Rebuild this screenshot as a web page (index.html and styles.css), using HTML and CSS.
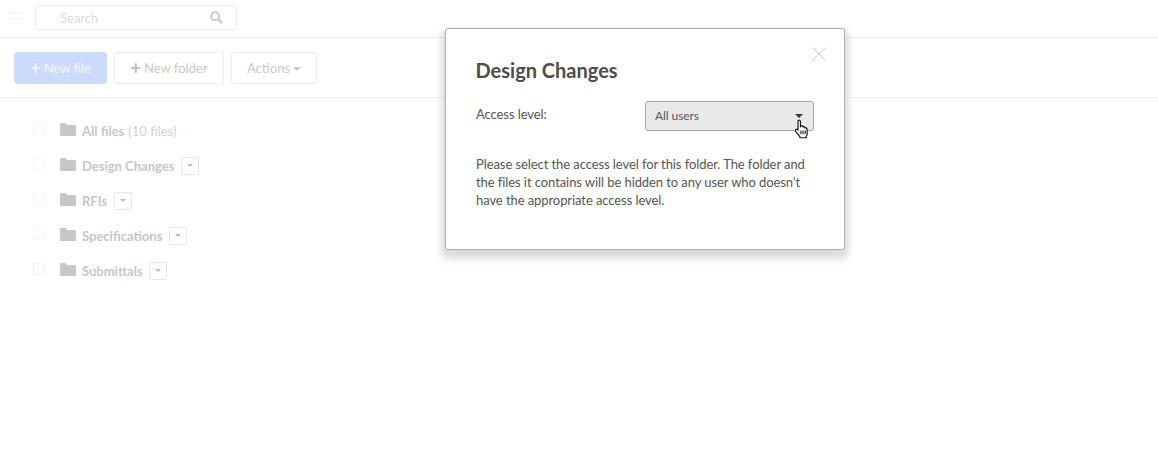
FILE: index.html
```html
<!DOCTYPE html>
<html lang="en">
<head>
<meta charset="utf-8">
<title>Files</title>
<link rel="stylesheet" href="styles.css">
</head>
<body>
<div class="page">
  <header class="topbar">
    <svg class="menu-icon" width="16" height="12" viewBox="0 0 16 12"><path d="M0 1h15M0 6h15M0 11h15" stroke="#eeeff1" stroke-width="1" fill="none"/></svg>
    <div class="search">
      <span class="search-text">Search</span>
      <svg width="13" height="13" viewBox="0 0 13 13"><circle cx="5.2" cy="5.2" r="4" stroke="#c4c4c4" stroke-width="1.7" fill="none"/><path d="M8.2 8.2l3.8 3.8" stroke="#c4c4c4" stroke-width="2" fill="none"/></svg>
    </div>
  </header>
  <div class="toolbar">
    <button class="btn btn-primary"><span class="plus">+</span>New file</button>
    <button class="btn btn-new-folder"><span class="plus">+</span>New folder</button>
    <button class="btn btn-actions">Actions<span class="caret"></span></button>
  </div>
  <ul class="folders">
    <li class="folder"><span class="check"></span><svg class="folder-icon" width="16" height="13" viewBox="0 0 16 13"><path d="M1.5 0h4l1.5 2h7.5a1.5 1.5 0 0 1 1.5 1.5v8a1.5 1.5 0 0 1-1.5 1.5h-13A1.5 1.5 0 0 1 0 11.500v-10A1.500 1.500 0 0 1 1.500 0z" fill="#c6c6c6"/></svg><span class="name">All files</span><span class="count">(10 files)</span></li>
    <li class="folder"><span class="check"></span><svg class="folder-icon" width="16" height="13" viewBox="0 0 16 13"><path d="M1.5 0h4l1.5 2h7.5a1.5 1.5 0 0 1 1.5 1.5v8a1.5 1.5 0 0 1-1.5 1.5h-13A1.5 1.5 0 0 1 0 11.500v-10A1.500 1.500 0 0 1 1.500 0z" fill="#c6c6c6"/></svg><span class="name">Design Changes</span><span class="drop"><span class="caret small"></span></span></li>
    <li class="folder"><span class="check"></span><svg class="folder-icon" width="16" height="13" viewBox="0 0 16 13"><path d="M1.5 0h4l1.5 2h7.5a1.5 1.5 0 0 1 1.5 1.5v8a1.5 1.5 0 0 1-1.5 1.5h-13A1.5 1.5 0 0 1 0 11.500v-10A1.500 1.500 0 0 1 1.500 0z" fill="#c6c6c6"/></svg><span class="name">RFIs</span><span class="drop"><span class="caret small"></span></span></li>
    <li class="folder"><span class="check"></span><svg class="folder-icon" width="16" height="13" viewBox="0 0 16 13"><path d="M1.5 0h4l1.5 2h7.5a1.5 1.5 0 0 1 1.5 1.5v8a1.5 1.5 0 0 1-1.5 1.5h-13A1.5 1.5 0 0 1 0 11.500v-10A1.500 1.500 0 0 1 1.500 0z" fill="#c6c6c6"/></svg><span class="name">Specifications</span><span class="drop"><span class="caret small"></span></span></li>
    <li class="folder"><span class="check"></span><svg class="folder-icon" width="16" height="13" viewBox="0 0 16 13"><path d="M1.5 0h4l1.5 2h7.5a1.5 1.5 0 0 1 1.5 1.5v8a1.5 1.5 0 0 1-1.5 1.5h-13A1.5 1.5 0 0 1 0 11.500v-10A1.500 1.500 0 0 1 1.500 0z" fill="#c6c6c6"/></svg><span class="name">Submittals</span><span class="drop"><span class="caret small"></span></span></li>
  </ul>
  <section class="modal">
    <svg class="close" width="14" height="14" viewBox="0 0 14 14"><path d="M.5.5l13 13M13.500.5l-13 13" stroke="#c9c9c9" stroke-width="1" fill="none"/></svg>
    <h2 class="modal-title">Design Changes</h2>
    <div class="field">
      <span class="field-label">Access level:</span>
      <div class="select"><span>All users</span><span class="select-caret"></span></div>
    </div>
    <p class="help">Please select the access level for this folder. The folder and the files it contains will be hidden to any user who doesn’t have the appropriate access level.</p>
    <svg class="cursor" width="15" height="19" viewBox="0 0 15 19"><path d="M4 1.500c.8-.8 2-.4 2 .8v5.200l.2-.8c.6-.8 1.800-.5 2 .4l.1.500c.6-.7 1.700-.4 1.900.5l.1.500c.7-.6 1.800-.2 1.900.8l.3 3.600c.1 1.700-.3 2.700-1 3.800v1H5.500v-1L1.700 12C.8 10.800 1.300 9.600 2.700 9.800l1 .7V2.200z" fill="#fff" stroke="#111" stroke-width="1.100" stroke-linejoin="round"/><path d="M6.500 11v3.500M8.500 11v3.500M10.500 11v3.500" stroke="#111" stroke-width="1" fill="none"/></svg>
  </section>
</div>
</body>
</html>
```
FILE: styles.css
```css
* { box-sizing: border-box; }
html, body { margin: 0; padding: 0; }
body { background: #fff; font-family: Lato, "Open Sans", sans-serif; }
.page { position: relative; width: 1158px; height: 452px; overflow: hidden; }

.topbar { height: 38px; border-bottom: 1px solid #eeeeee; display: flex; align-items: center; padding: 0 0 1px 9px; gap: 10px; }
.menu-icon { display: block; }
.search { width: 202px; height: 25px; border: 1px solid #eaeaea; border-radius: 3px; display: flex; align-items: center; justify-content: space-between; padding: 0 13px 0 24px; margin-top: -1px; }
.search-text { font-size: 13px; color: #dcdcdc; }

.toolbar { height: 60px; border-bottom: 1px solid #f1f1f1; display: flex; align-items: center; padding: 1px 0 0 14px; gap: 7px; }
.btn { height: 32px; border-radius: 3px; border: 1px solid #ececec; background: #fff; color: #c9c9c9; font: 13px/1 Lato, sans-serif; padding: 0; display: flex; align-items: center; justify-content: center; }
.btn-primary { width: 93px; background: #ccdafb; border-color: #ccdafb; color: #f2f5fe; }
.btn-new-folder { width: 110px; }
.btn-actions { width: 86px; }
.plus { font-size: 18px; font-weight: 700; line-height: 1; margin-right: 3px; }
.btn-new-folder .plus { color: #bcbcbc; }
.caret { display: inline-block; width: 0; height: 0; border-left: 4px solid transparent; border-right: 4px solid transparent; border-top: 4px solid #c6c6c6; margin-left: 3px; margin-top: 2px; }
.caret.small { border-left-width: 3px; border-right-width: 3px; border-top-width: 3px; border-top-color: #bdbdbd; margin: 0; }

.folders { list-style: none; margin: 0; padding: 15px 0 0 33px; }
.folder { height: 35px; display: flex; align-items: center; font-size: 13px; color: #c6c6c6; }
.check { width: 12px; height: 12px; border: 1px solid #f3f3f3; border-radius: 2px; margin: -4px 15px 0 0; }
.folder-icon { margin: -3px 6px 0 0; flex: none; }
.name { font-weight: 700; }
.count { margin-left: 4px; color: #d2d2d2; }
.drop { width: 18px; height: 18px; border: 1px solid #e6e6e6; border-radius: 2px; margin-left: 6.6px; display: flex; align-items: center; justify-content: center; }

.modal { position: absolute; left: 445px; top: 28px; width: 400px; height: 222px; background: #fff; border: 1px solid #b0b0b0; border-radius: 3px; box-shadow: 0 4px 6px 3px rgba(0,0,0,.1), 0 7px 8px 5px rgba(0,0,0,.05); padding: 29px 30px 0; color: #555; letter-spacing: -.08px; }
.close { position: absolute; right: 18px; top: 18px; }
.modal-title { margin: 0 0 19px -.5px; font-size: 20px; font-weight: 700; line-height: 24px; color: #4d4d4d; letter-spacing: 0; }
.field { display: flex; align-items: flex-start; justify-content: space-between; width: 338px; }
.field-label { font-size: 13px; line-height: 26px; }
.select { width: 169px; height: 30px; background: #e9e9e9; border: 1px solid #a8a8a8; border-radius: 3px; font-size: 12px; padding: 0 10px 2px 9px; display: flex; align-items: center; justify-content: space-between; color: #555; }
.select-caret { width: 0; height: 0; border-left: 4px solid transparent; border-right: 4px solid transparent; border-top: 4px solid #333; margin-top: 2px; }
.help { margin: 24px 0 0; font-size: 13px; line-height: 18px; width: 338px; }
.cursor { position: absolute; left: 348px; top: 90px; width: 16px; height: 20px; }
```
